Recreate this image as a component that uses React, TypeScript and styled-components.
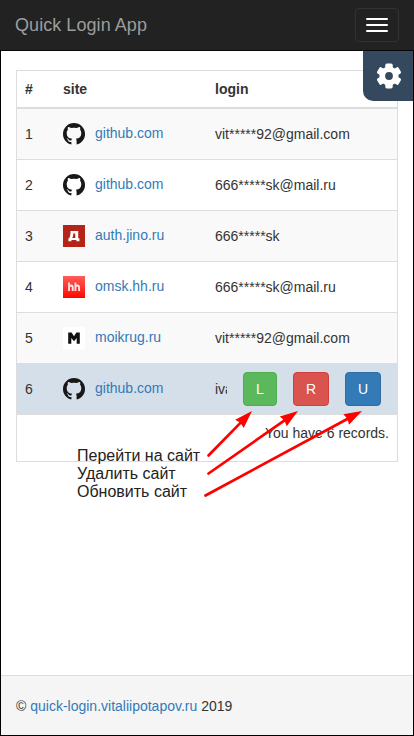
import React from 'react';
import styled, { createGlobalStyle } from 'styled-components';

const GlobalStyle = createGlobalStyle`
  *, *::before, *::after { box-sizing: border-box; }
  html, body { margin: 0; padding: 0; }
  body {
    font: 14px/20px "Liberation Sans", Arial, sans-serif;
    color: #333;
    background: #fff;
  }
`;

const Page = styled.div`
  position: relative;
  display: flex;
  flex-direction: column;
  width: 414px;
  height: 736px;
  overflow: hidden;
  background: #fff;
`;

const Navbar = styled.header`
  display: flex;
  align-items: center;
  justify-content: space-between;
  flex: none;
  height: 51px;
  padding: 0 15px;
  background: #222;
  border-bottom: 1px solid #080808;
`;

const Brand = styled.a`
  font-size: 18px;
  line-height: 20px;
  letter-spacing: 0.06px;
  color: #9d9d9d;
`;

const Toggle = styled.button`
  display: flex;
  flex-direction: column;
  justify-content: center;
  align-items: center;
  gap: 4px;
  width: 44px;
  height: 34px;
  padding: 0;
  background: transparent;
  border: 1px solid #333;
  border-radius: 4px;
`;

const Bar = styled.span`
  width: 22px;
  height: 2px;
  border-radius: 1px;
  background: #fff;
`;

const Body = styled.div`
  display: flex;
  flex-direction: column;
  flex: 1;
  border: 1px solid #000;
  border-top: 0;
`;

const Main = styled.main`
  flex: 1;
  padding: 19px 15px 0;
`;

const SettingsTab = styled.button`
  position: absolute;
  top: 51px;
  right: 1px;
  display: flex;
  align-items: center;
  justify-content: center;
  width: 50px;
  height: 50px;
  padding: 0 0 0 2px;
  color: #fff;
  background: #34495e;
  border: 0;
  border-radius: 0 0 0 10px;
`;

const Panel = styled.section`
  border: 1px solid #ddd;
  width: 382px;
`;

const columns = '38px 152px 1fr';

const HeadRow = styled.div`
  display: grid;
  grid-template-columns: ${columns};
  height: 38px;
  padding: 8px 0 8px 8px;
  font-weight: bold;
  border-bottom: 2px solid #ddd;
`;

const Row = styled.div<{ $tone: 'odd' | 'even' | 'active' }>`
  display: grid;
  grid-template-columns: ${columns};
  align-items: center;
  height: 51px;
  padding-left: 8px;
  border-bottom: 1px solid ${p => (p.$tone === 'active' ? '#d5dfe9' : '#ddd')};
  background: ${p => ({ odd: '#f9f9f9', even: '#fff', active: '#d5dfe9' })[p.$tone]};

  &:has(+ [data-active='true']) {
    border-bottom-color: #d5dfe9;
  }
`;

const Cell = styled.div`
  padding-bottom: 1px;
`;

const SiteCell = styled.div`
  display: flex;
  align-items: center;
  gap: 10px;
`;

const IconBox = styled.svg`
  display: block;
  flex: none;
  width: 22px;
  height: 22px;
`;

const Link = styled.a`
  color: #337ab7;
`;

const SiteLink = styled(Link)`
  margin-top: -3px;
`;

const ActionCell = styled.div`
  display: flex;
  align-items: center;
  padding-bottom: 1px;
`;

const Clipped = styled.span`
  width: 12px;
  margin-right: 16px;
  overflow: hidden;
  white-space: nowrap;
`;

const Action = styled.button<{ $bg: string; $edge: string; $w: number }>`
  width: ${p => p.$w}px;
  height: 34px;
  margin-right: 16px;
  padding: 0;
  font: 14px/20px "Liberation Sans", Arial, sans-serif;
  color: #fff;
  background: ${p => p.$bg};
  border: 1px solid ${p => p.$edge};
  border-radius: 4px;
`;

const Summary = styled.div`
  height: 47px;
  margin-top: -1px;
  padding: 8px 8px 0 0;
  text-align: right;
  border-top: 1px solid #ddd;
`;

const Footer = styled.footer`
  height: 60px;
  padding: 20px 15px;
  background: #f5f5f5;
  border-top: 1px solid #ddd;
`;

const Notes = styled.div`
  position: absolute;
  left: 77px;
  top: 447px;
  font-size: 16px;
  line-height: 18px;
  color: #222;
  white-space: nowrap;
`;

const Arrows = styled.svg`
  position: absolute;
  left: 200px;
  top: 400px;
  width: 170px;
  height: 100px;
  pointer-events: none;
`;

type SiteBrand = 'github' | 'jino' | 'hh' | 'moikrug';

const GithubMark = () => (
  <IconBox viewBox="0 0 22 22">
    <path
      fill="#191717"
      d="M8.4 21.6C3.4 20.4 0 16.2 0 11A11 11 0 0 1 22 11C22 16.2 18.6 20.4 13.6 21.6V18C13.6 16.9 13.3 16.2 12.8 15.8C16.4 15.3 18.3 13.6 18.3 10.2C18.3 8.7 17.9 7.5 17.1 6.7C17.4 5.8 17.4 4.8 17 3.9C15.9 3.9 14.9 4.4 13.9 5.1Q11 4.4 8.1 5.1C7.1 4.4 6.1 3.9 5 3.9C4.6 4.8 4.6 5.8 4.9 6.7C4.1 7.5 3.7 8.7 3.7 10.2C3.7 13.6 5.6 15.3 9.2 15.8C8.8 16.1 8.6 16.6 8.5 17.2C7.2 17.8 6.1 17.5 5.4 16.3C5 15.6 4.4 15.2 3.5 15.3C4.5 15.8 4.7 16.7 5.2 17.7C5.8 18.9 7 19.2 8.4 18.9Z"
    />
  </IconBox>
);

const JinoMark = () => (
  <IconBox viewBox="0 0 22 22">
    <rect width="22" height="22" fill="#b52419" />
    <path
      fill="#fff"
      fillRule="evenodd"
      d="M7.6 6H15.2V13.2H16.4V16.2H13.4V15H8.4V16.2H5.4V13.2H6.3C7.2 11.6 7.5 9.2 7.6 6ZM10.3 8.4C10.2 10.4 9.9 12 9.2 13H12.3V8.4Z"
    />
  </IconBox>
);

const HhMark = () => (
  <IconBox viewBox="0 0 22 22">
    <defs>
      <linearGradient id="hhFill" x1="0" y1="0" x2="0" y2="1">
        <stop offset="0" stopColor="#ff5c58" />
        <stop offset="0.5" stopColor="#ff3531" />
        <stop offset="1" stopColor="#ff0600" />
      </linearGradient>
    </defs>
    <rect width="22" height="22" fill="url(#hhFill)" />
    <path
      fill="none"
      stroke="#ffe9e8"
      strokeWidth="1.8"
      d="M6 6.4V15M6 11.2Q6.4 9.5 8 9.5Q9.7 9.5 9.7 11.5V15M12.4 6.4V15M12.4 11.2Q12.8 9.5 14.4 9.5Q16.1 9.5 16.1 11.5V15"
    />
  </IconBox>
);

const MoikrugMark = () => (
  <IconBox viewBox="0 0 22 22">
    <rect width="22" height="22" fill="#fff" />
    <path
      fill="#111"
      d="M5.2 5.6H8.6L11 9.2L13.4 5.6H16.8V16.8H13.7V11L11 14.2L8.3 11V16.8H5.2Z"
    />
  </IconBox>
);

const GearIcon = () => (
  <svg width="26" height="26" viewBox="-13 -13 26 26">
    <g fill="#fff">
      <circle r="9.6" />
      {[0, 60, 120].map(a => (
        <rect
          key={a}
          x="-3.7"
          y="-12.4"
          width="7.4"
          height="24.8"
          rx="1.6"
          transform={`rotate(${a})`}
        />
      ))}
    </g>
    <circle r="3.9" fill="#34495e" />
  </svg>
);

const marks: Record<SiteBrand, () => React.JSX.Element> = {
  github: GithubMark,
  jino: JinoMark,
  hh: HhMark,
  moikrug: MoikrugMark,
};

const records: { brand: SiteBrand; site: string; login: string }[] = [
  { brand: 'github', site: 'github.com', login: 'vit*****92@gmail.com' },
  { brand: 'github', site: 'github.com', login: '666*****sk@mail.ru' },
  { brand: 'jino', site: 'auth.jino.ru', login: '666*****sk' },
  { brand: 'hh', site: 'omsk.hh.ru', login: '666*****sk@mail.ru' },
  { brand: 'moikrug', site: 'moikrug.ru', login: 'vit*****92@gmail.com' },
  { brand: 'github', site: 'github.com', login: 'iva' },
];

const arrows = [
  [8.5, 55.5, 52, 11],
  [8.5, 73.5, 98, 11],
  [5.5, 95.5, 162, 11],
];

const Arrow = ({ points: [x1, y1, x2, y2] }: { points: number[] }) => {
  const length = Math.hypot(x2 - x1, y2 - y1);
  const angle = (Math.atan2(y2 - y1, x2 - x1) * 180) / Math.PI;
  return (
    <g transform={`translate(${x1} ${y1}) rotate(${angle})`}>
      <path d={`M0 0H${length - 12}`} stroke="#f00" strokeWidth="2.7" strokeLinecap="round" />
      <path d={`M${length} 0L${length - 18} -6L${length - 16.5} 0L${length - 18} 6Z`} fill="#f00" />
    </g>
  );
};

export default function App() {
  return (
    <>
      <GlobalStyle />
      <Page>
        <Navbar>
          <Brand>Quick Login App</Brand>
          <Toggle aria-label="Menu">
            <Bar />
            <Bar />
            <Bar />
          </Toggle>
        </Navbar>
        <Body>
          <Main>
            <Panel>
              <HeadRow>
                <span>#</span>
                <span>site</span>
                <span>login</span>
              </HeadRow>
              {records.map((r, i) => {
                const active = i === records.length - 1;
                const Mark = marks[r.brand];
                return (
                  <Row
                    key={i}
                    data-active={active}
                    $tone={active ? 'active' : i % 2 ? 'even' : 'odd'}
                  >
                    <Cell>{i + 1}</Cell>
                    <SiteCell>
                      <Mark />
                      <SiteLink>{r.site}</SiteLink>
                    </SiteCell>
                    {active ? (
                      <ActionCell>
                        <Clipped>{r.login}</Clipped>
                        <Action $w={34} $bg="#5cb85c" $edge="#4cae4c">L</Action>
                        <Action $w={36} $bg="#d9534f" $edge="#d43f3a">R</Action>
                        <Action $w={36} $bg="#337ab7" $edge="#2e6da4">U</Action>
                      </ActionCell>
                    ) : (
                      <Cell>{r.login}</Cell>
                    )}
                  </Row>
                );
              })}
              <Summary>You have 6 records.</Summary>
            </Panel>
          </Main>
          <Footer>
            © <Link>quick-login.vitaliipotapov.ru</Link> 2019
          </Footer>
        </Body>
        <SettingsTab aria-label="Settings">
          <GearIcon />
        </SettingsTab>
        <Notes>
          <div>Перейти на сайт</div>
          <div>Удалить сайт</div>
          <div>Обновить сайт</div>
        </Notes>
        <Arrows viewBox="0 0 170 100">
          {arrows.map((points, i) => (
            <Arrow key={i} points={points} />
          ))}
        </Arrows>
      </Page>
    </>
  );
}
